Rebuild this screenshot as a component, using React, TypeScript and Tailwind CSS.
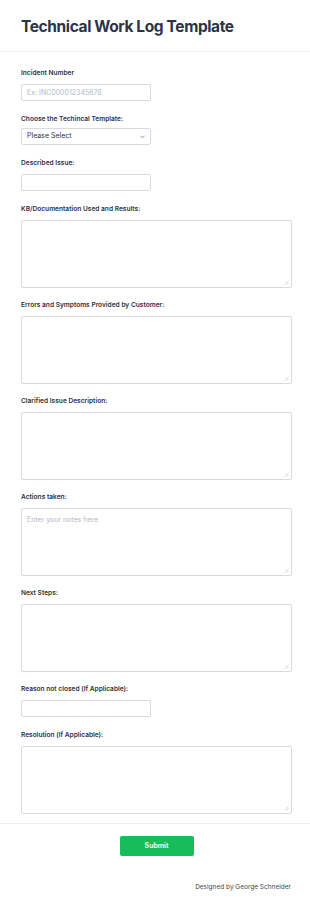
import type { ReactNode } from 'react';

const labelCls = "block text-[6.6px] leading-[10px] font-semibold text-[#2c3345]";
const boxCls = "block border border-[#d8dae1] rounded-[2px] bg-white text-[7px] text-[#2c3345] px-[5px] outline-none placeholder:text-[#b4b8c6]";

function Field({ label, children, gap = "pb-[13px]" }: { label: string; children: ReactNode; gap?: string }) {
  return (
    <div className={gap}>
      <label className={labelCls}>{label}</label>
      <div className="mt-[6px]">{children}</div>
    </div>
  );
}

function Area({ placeholder }: { placeholder?: string }) {
  return (
    <div className="relative w-[271px]">
      <textarea
        placeholder={placeholder}
        className={`${boxCls} w-[271px] h-[68px] pt-[6px] resize-none`}
      />
      <svg className="absolute right-[3px] bottom-[3px] pointer-events-none" width="5" height="5" viewBox="0 0 5 5">
        <path d="M4.5 0.5 L0.5 4.5 M4.5 2.5 L2.5 4.5" stroke="#c5c8d0" strokeWidth="0.7" />
      </svg>
    </div>
  );
}

function Line({ placeholder }: { placeholder?: string }) {
  return <input type="text" placeholder={placeholder} className={`${boxCls} w-[130px] h-[17px]`} />;
}

export default function App() {
  return (
    <div className="min-h-screen bg-white font-['Inter',sans-serif] text-[#2c3345]">
      <header className="h-[52px] border-b border-[#eceef2] px-[21px] flex items-center">
        <h1 className="text-[15.5px] font-bold tracking-tight text-[#2c3345] mt-[2px]">Technical Work Log Template</h1>
      </header>

      <form className="px-[21px] pt-[16px]" onSubmit={(e) => e.preventDefault()}>
        <Field label="Incident Number">
          <Line placeholder="Ex: INC000012345678" />
        </Field>
        <Field label="Choose the Techincal Template:">
          <div className="relative w-[130px] -mt-[2px]">
            <select className={`${boxCls} w-[130px] h-[17px] appearance-none`}>
              <option>Please Select</option>
            </select>
            <svg className="absolute right-[6px] top-[7px] pointer-events-none" width="5" height="4" viewBox="0 0 5 4">
              <path d="M0.5 0.8 L2.5 2.8 L4.5 0.8" fill="none" stroke="#6b7183" strokeWidth="0.8" />
            </svg>
          </div>
        </Field>
        <Field label="Described Issue:">
          <Line />
        </Field>
        <Field label="KB/Documentation Used and Results:" gap="pb-[12px]">
          <Area />
        </Field>
        <Field label="Errors and Symptoms Provided by Customer:" gap="pb-[12px]">
          <Area />
        </Field>
        <Field label="Clarified Issue Description:" gap="pb-[12px]">
          <Area />
        </Field>
        <Field label="Actions taken:" gap="pb-[12px]">
          <Area placeholder="Enter your notes here" />
        </Field>
        <Field label="Next Steps:" gap="pb-[12px]">
          <Area />
        </Field>
        <Field label="Reason not closed (If Applicable):">
          <Line />
        </Field>
        <Field label="Resolution (If Applicable):" gap="">
          <Area />
        </Field>
      </form>

      <div className="mt-[9px] border-t border-[#eceef2] pt-[12px] flex justify-center">
        <button className="w-[74px] h-[20px] rounded-[2px] bg-[#18bd5b] text-white text-[7px] font-semibold ml-[3px]">Submit</button>
      </div>

      <div className="pt-[27px] pr-[19px] text-right text-[6.5px] text-[#3e4556]">Designed by George Schneider</div>
    </div>
  );
}
